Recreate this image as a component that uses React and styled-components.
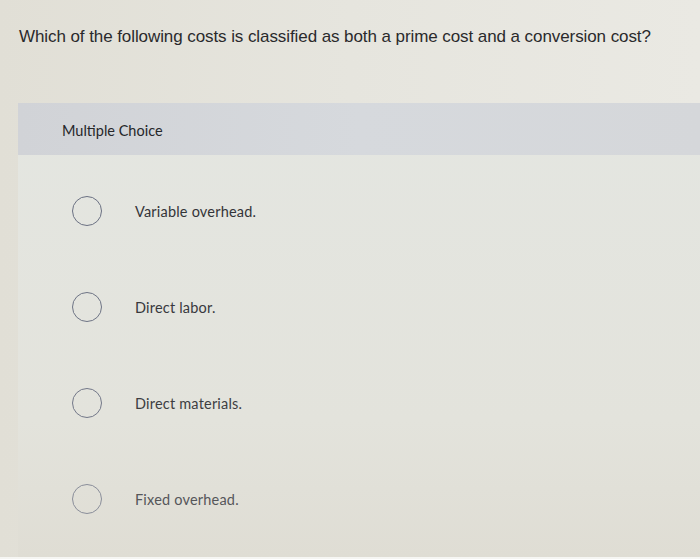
import React from "react";
import styled, { createGlobalStyle } from "styled-components";

const Global = createGlobalStyle`
  html, body { margin: 0; padding: 0; }
  body {
    width: 700px;
    height: 559px;
    overflow: hidden;
    background: linear-gradient(90deg, #e1dfd6 0%, #e6e5de 50%, #eae9e3 100%);
  }
`;

const Page = styled.div`
  width: 700px;
  height: 559px;
  display: flex;
  flex-direction: column;
  box-sizing: border-box;
  border-bottom: 2px solid #f6f6f3;
`;

const Question = styled.div`
  height: 103px;
  box-sizing: border-box;
  padding: 27px 0 0 19px;
  font-family: "Liberation Sans", Arial, sans-serif;
  font-size: 17px;
  color: #2a2a2c;
  letter-spacing: -0.08px;
`;

const Card = styled.div`
  margin-left: 18px;
  flex: 1;
  display: flex;
  flex-direction: column;
  background: linear-gradient(180deg, #e4e6e1 0%, #e3e3dc 70%, #dfddd4 100%);
`;

const Band = styled.div`
  height: 52px;
  display: flex;
  align-items: center;
  padding-left: 44px;
  padding-top: 2px;
  box-sizing: border-box;
  background: linear-gradient(90deg, #d1d3d7 0%, #d6d9dd 50%, #d5d7da 100%);
  font-family: Lato, "Open Sans", sans-serif;
  font-size: 14.5px;
  color: #26272a;
`;

const List = styled.div`
  display: flex;
  flex-direction: column;
  padding-top: 41px;
  gap: 66px;
`;

const Row = styled.div`
  height: 30px;
  display: flex;
  align-items: center;
  padding-left: 54px;
`;

const Radio = styled.span`
  width: 30px;
  height: 30px;
  box-sizing: border-box;
  border-radius: 50%;
  border: 1.8px solid ${(p) => p.$color};
  flex: none;
`;

const Label = styled.span`
  margin-left: 33px;
  font-family: Lato, "Open Sans", sans-serif;
  font-size: 14.5px;
  color: ${(p) => p.$color};
  letter-spacing: 0.2px;
`;

const options = [
  { text: "Variable overhead.", ring: "#6b7183", color: "#333438" },
  { text: "Direct labor.", ring: "#6e7485", color: "#38393d" },
  { text: "Direct materials.", ring: "#737889", color: "#3d3e42" },
  { text: "Fixed overhead.", ring: "#8a8e9a", color: "#55565a" },
];

export default function App() {
  return (
    <>
      <Global />
      <Page>
        <Question>
          Which of the following costs is classified as both a prime cost and a conversion cost?
        </Question>
        <Card>
          <Band>Multiple Choice</Band>
          <List>
            {options.map((o) => (
              <Row key={o.text}>
                <Radio $color={o.ring} />
                <Label $color={o.color}>{o.text}</Label>
              </Row>
            ))}
          </List>
        </Card>
      </Page>
    </>
  );
}
